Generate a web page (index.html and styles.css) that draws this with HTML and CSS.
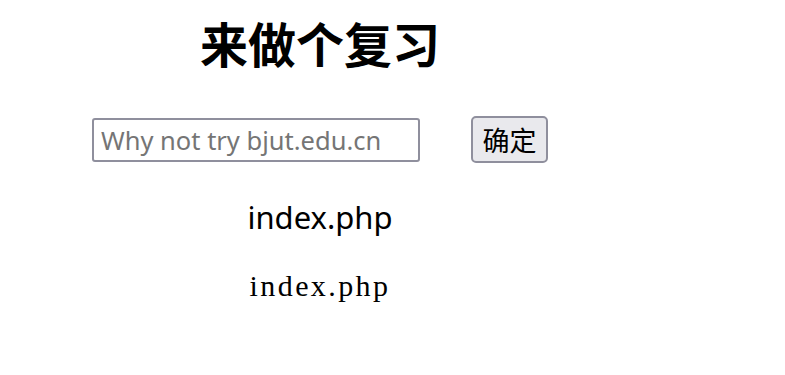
FILE: index.html
```html
<!DOCTYPE html>
<html lang="zh-CN">
<head>
<meta charset="utf-8">
<title>来做个复习</title>
<link rel="stylesheet" href="styles.css">
</head>
<body>
<main class="page">
  <h1 class="title">来做个复习</h1>
  <form class="query">
    <input class="query-input" type="text" placeholder="Why not try bjut.edu.cn">
    <button class="query-btn" type="button">确定</button>
  </form>
  <p class="result-sans">index.php</p>
  <p class="result-serif">index.php</p>
</main>
</body>
</html>
```

FILE: styles.css
```css
html, body {
  margin: 0;
  padding: 0;
  background: #ffffff;
}

body {
  padding: 8px;
}

.page {
  width: 624px;
  text-align: center;
  font-family: "Noto Sans", "Noto Sans CJK SC", sans-serif;
  color: #000;
}

.title {
  margin: 0;
  padding-top: 4px;
  font-family: "Noto Sans CJK SC", sans-serif;
  font-size: 48px;
  font-weight: 700;
  line-height: 60px;
}

.query {
  margin: 0;
  padding-top: 44px;
  display: flex;
  justify-content: center;
  align-items: center;
  gap: 51px;
}

.query-input {
  box-sizing: border-box;
  width: 328px;
  height: 44px;
  margin: 0;
  padding: 0 7px;
  border: 2px solid #8f8f9d;
  border-radius: 3px;
  font-family: "Noto Sans", sans-serif;
  font-size: 25.5px;
  color: #000;
  background: #fff;
  outline: none;
}

.query-input::placeholder {
  color: #757575;
  opacity: 1;
}

.query-btn {
  box-sizing: border-box;
  width: 77px;
  height: 47px;
  margin: 0;
  padding: 0;
  border: 2px solid #8f8f9d;
  border-radius: 5px;
  background: #e9e9ed;
  font-family: "Noto Sans CJK SC", sans-serif;
  font-size: 27px;
  color: #000;
}

.result-sans {
  margin: 29px 0 0;
  font-family: "Noto Sans", sans-serif;
  font-size: 31px;
  line-height: 50px;
}

.result-serif {
  margin: 24px 0 0;
  font-family: "Liberation Serif", serif;
  font-size: 30px;
  letter-spacing: 2.4px;
  line-height: 40px;
}
```
